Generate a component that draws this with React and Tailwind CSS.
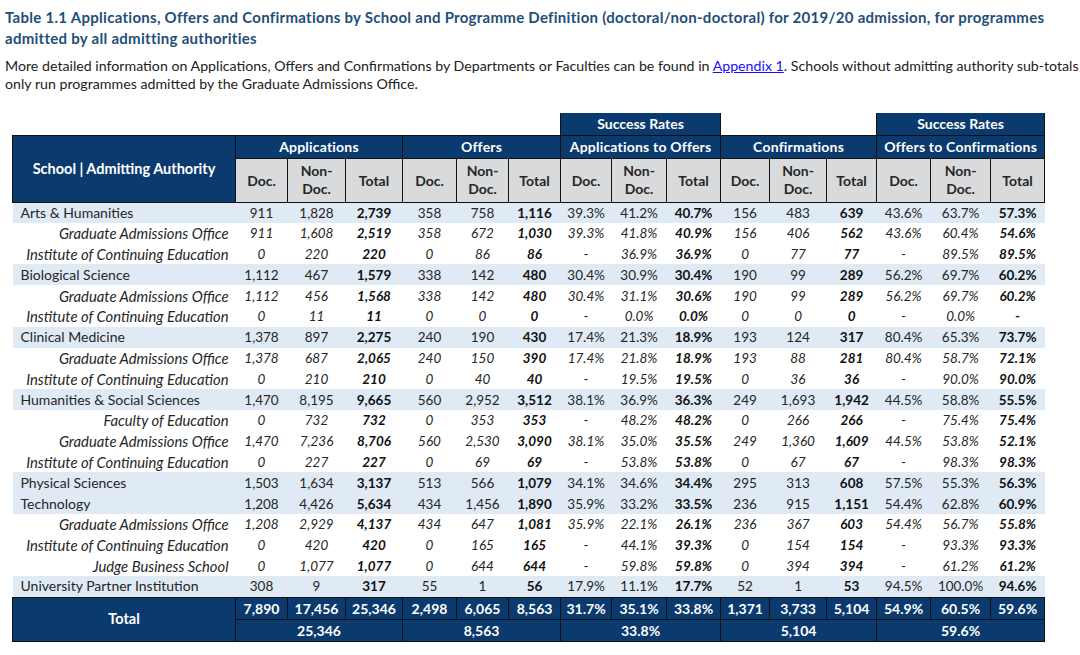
import React from "react";

const NAVY = "bg-[#0b3a6e]";

const rows = [
  ["s", "Arts & Humanities", "911", "1,828", "2,739", "358", "758", "1,116", "39.3%", "41.2%", "40.7%", "156", "483", "639", "43.6%", "63.7%", "57.3%"],
  ["a", "Graduate Admissions Office", "911", "1,608", "2,519", "358", "672", "1,030", "39.3%", "41.8%", "40.9%", "156", "406", "562", "43.6%", "60.4%", "54.6%"],
  ["a", "Institute of Continuing Education", "0", "220", "220", "0", "86", "86", "-", "36.9%", "36.9%", "0", "77", "77", "-", "89.5%", "89.5%"],
  ["s", "Biological Science", "1,112", "467", "1,579", "338", "142", "480", "30.4%", "30.9%", "30.4%", "190", "99", "289", "56.2%", "69.7%", "60.2%"],
  ["a", "Graduate Admissions Office", "1,112", "456", "1,568", "338", "142", "480", "30.4%", "31.1%", "30.6%", "190", "99", "289", "56.2%", "69.7%", "60.2%"],
  ["a", "Institute of Continuing Education", "0", "11", "11", "0", "0", "0", "-", "0.0%", "0.0%", "0", "0", "0", "-", "0.0%", "-"],
  ["s", "Clinical Medicine", "1,378", "897", "2,275", "240", "190", "430", "17.4%", "21.3%", "18.9%", "193", "124", "317", "80.4%", "65.3%", "73.7%"],
  ["a", "Graduate Admissions Office", "1,378", "687", "2,065", "240", "150", "390", "17.4%", "21.8%", "18.9%", "193", "88", "281", "80.4%", "58.7%", "72.1%"],
  ["a", "Institute of Continuing Education", "0", "210", "210", "0", "40", "40", "-", "19.5%", "19.5%", "0", "36", "36", "-", "90.0%", "90.0%"],
  ["s", "Humanities & Social Sciences", "1,470", "8,195", "9,665", "560", "2,952", "3,512", "38.1%", "36.9%", "36.3%", "249", "1,693", "1,942", "44.5%", "58.8%", "55.5%"],
  ["a", "Faculty of Education", "0", "732", "732", "0", "353", "353", "-", "48.2%", "48.2%", "0", "266", "266", "-", "75.4%", "75.4%"],
  ["a", "Graduate Admissions Office", "1,470", "7,236", "8,706", "560", "2,530", "3,090", "38.1%", "35.0%", "35.5%", "249", "1,360", "1,609", "44.5%", "53.8%", "52.1%"],
  ["a", "Institute of Continuing Education", "0", "227", "227", "0", "69", "69", "-", "53.8%", "53.8%", "0", "67", "67", "-", "98.3%", "98.3%"],
  ["s", "Physical Sciences", "1,503", "1,634", "3,137", "513", "566", "1,079", "34.1%", "34.6%", "34.4%", "295", "313", "608", "57.5%", "55.3%", "56.3%"],
  ["s", "Technology", "1,208", "4,426", "5,634", "434", "1,456", "1,890", "35.9%", "33.2%", "33.5%", "236", "915", "1,151", "54.4%", "62.8%", "60.9%"],
  ["a", "Graduate Admissions Office", "1,208", "2,929", "4,137", "434", "647", "1,081", "35.9%", "22.1%", "26.1%", "236", "367", "603", "54.4%", "56.7%", "55.8%"],
  ["a", "Institute of Continuing Education", "0", "420", "420", "0", "165", "165", "-", "44.1%", "39.3%", "0", "154", "154", "-", "93.3%", "93.3%"],
  ["a", "Judge Business School", "0", "1,077", "1,077", "0", "644", "644", "-", "59.8%", "59.8%", "0", "394", "394", "-", "61.2%", "61.2%"],
  ["s", "University Partner Institution", "308", "9", "317", "55", "1", "56", "17.9%", "11.1%", "17.7%", "52", "1", "53", "94.5%", "100.0%", "94.6%"],
];

const totals = ["7,890", "17,456", "25,346", "2,498", "6,065", "8,563", "31.7%", "35.1%", "33.8%", "1,371", "3,733", "5,104", "54.9%", "60.5%", "59.6%"];
const groupTotals = ["25,346", "8,563", "33.8%", "5,104", "59.6%"];
const widths = [223, 52, 58, 57, 54, 52, 52, 51, 55, 54, 49, 57, 50, 54, 60, 54];

const groups = ["Applications", "Offers", "Applications to Offers", "Confirmations", "Offers to Confirmations"];

function SubHead() {
  return (
    <>
      <th className="border border-[#111] bg-[#d9dadc] font-bold text-[14px]">Doc.</th>
      <th className="border border-[#111] bg-[#d9dadc] font-bold text-[14px] leading-[18px]">
        Non-
        <br />
        Doc.
      </th>
      <th className="border border-[#111] bg-[#d9dadc] font-bold text-[14px]">Total</th>
    </>
  );
}

export default function App() {
  return (
    <div className="bg-white w-[1080px] h-[655px] overflow-hidden text-[#262626]" style={{ fontFamily: "Lato, 'Open Sans', sans-serif" }}>
      <div className="px-[5px] pt-[7px]">
        {/* title, broken where the source breaks it */}
        <h1 className="text-[15px] tracking-[0.28px] font-bold leading-[21px] text-[#1f4e79] whitespace-nowrap">
          Table 1.1 Applications, Offers and Confirmations by School and Programme Definition (doctoral/non-doctoral) for 2019/20 admission, for programmes
          <br />
          admitted by all admitting authorities
        </h1>
        <p className="mt-[8px] text-[14.2px] leading-[18px] text-[#222] whitespace-nowrap">
          More detailed information on Applications, Offers and Confirmations by Departments or Faculties can be found in{" "}
          <span className="text-[#1a0dff] underline">Appendix 1</span>. Schools without admitting authority sub-totals
          <br />
          only run programmes admitted by the Graduate Admissions Office.
        </p>
      </div>

      <table className="ml-[12px] mt-[20px] table-fixed border-collapse text-[13.5px]" style={{ width: 1032 }}>
        <colgroup>
          {widths.map((w, i) => (
            <col key={i} style={{ width: w }} />
          ))}
        </colgroup>
        <thead>
          <tr className="h-[22px]">
            <td colSpan={7} className="border-b border-[#111]"></td>
            <th colSpan={3} className={`${NAVY} text-white font-bold text-[14px] border border-[#111] border-t-0`}>Success Rates</th>
            <td colSpan={3} className="border-b border-[#111]"></td>
            <th colSpan={3} className={`${NAVY} text-white font-bold text-[14px] border border-[#111] border-t-0`}>Success Rates</th>
          </tr>
          <tr className="h-[23px]">
            <th rowSpan={2} className={`${NAVY} text-white font-bold border border-[#111] text-[14.5px]`}>
              School | Admitting Authority
            </th>
            {groups.map((g) => (
              <th key={g} colSpan={3} className={`${NAVY} text-white font-bold text-[14px] tracking-[0.2px] border border-[#111] whitespace-nowrap`}>
                {g}
              </th>
            ))}
          </tr>
          <tr className="h-[44px]">
            <SubHead />
            <SubHead />
            <SubHead />
            <SubHead />
            <SubHead />
          </tr>
        </thead>
        <tbody>
          {rows.map((r, ri) => {
            const school = r[0] === "s";
            return (
              <tr key={ri} className={`h-[20.8px] leading-[18px] ${school ? "bg-[#dfeaf5]" : ""}`}>
                <td className={`p-0 whitespace-nowrap ${school ? "pl-[8px] text-left text-[14px]" : "pr-[7px] text-right italic text-[14.8px]"}`}>{r[1]}</td>
                {r.slice(2).map((v, ci) => {
                  const bold = ci % 3 === 2;
                  return (
                    <td
                      key={ci}
                      className={`p-0 text-center whitespace-nowrap ${bold ? "font-bold text-[#111]" : ""} ${!school && v !== "-" ? "italic" : ""}`}
                    >
                      {v}
                    </td>
                  );
                })}
              </tr>
            );
          })}
          <tr className="h-[22px]">
            <th rowSpan={2} className={`${NAVY} text-white font-bold border border-[#111] text-[14.5px]`}>Total</th>
            {totals.map((v, i) => (
              <td key={i} className={`${NAVY} text-white font-bold text-[14px] text-center border border-[#111] whitespace-nowrap`}>
                {v}
              </td>
            ))}
          </tr>
          <tr className="h-[21px]">
            {groupTotals.map((v, i) => (
              <td key={i} colSpan={3} className={`${NAVY} text-white font-bold text-[14px] text-center border border-[#111]`}>
                {v}
              </td>
            ))}
          </tr>
        </tbody>
      </table>
    </div>
  );
}
